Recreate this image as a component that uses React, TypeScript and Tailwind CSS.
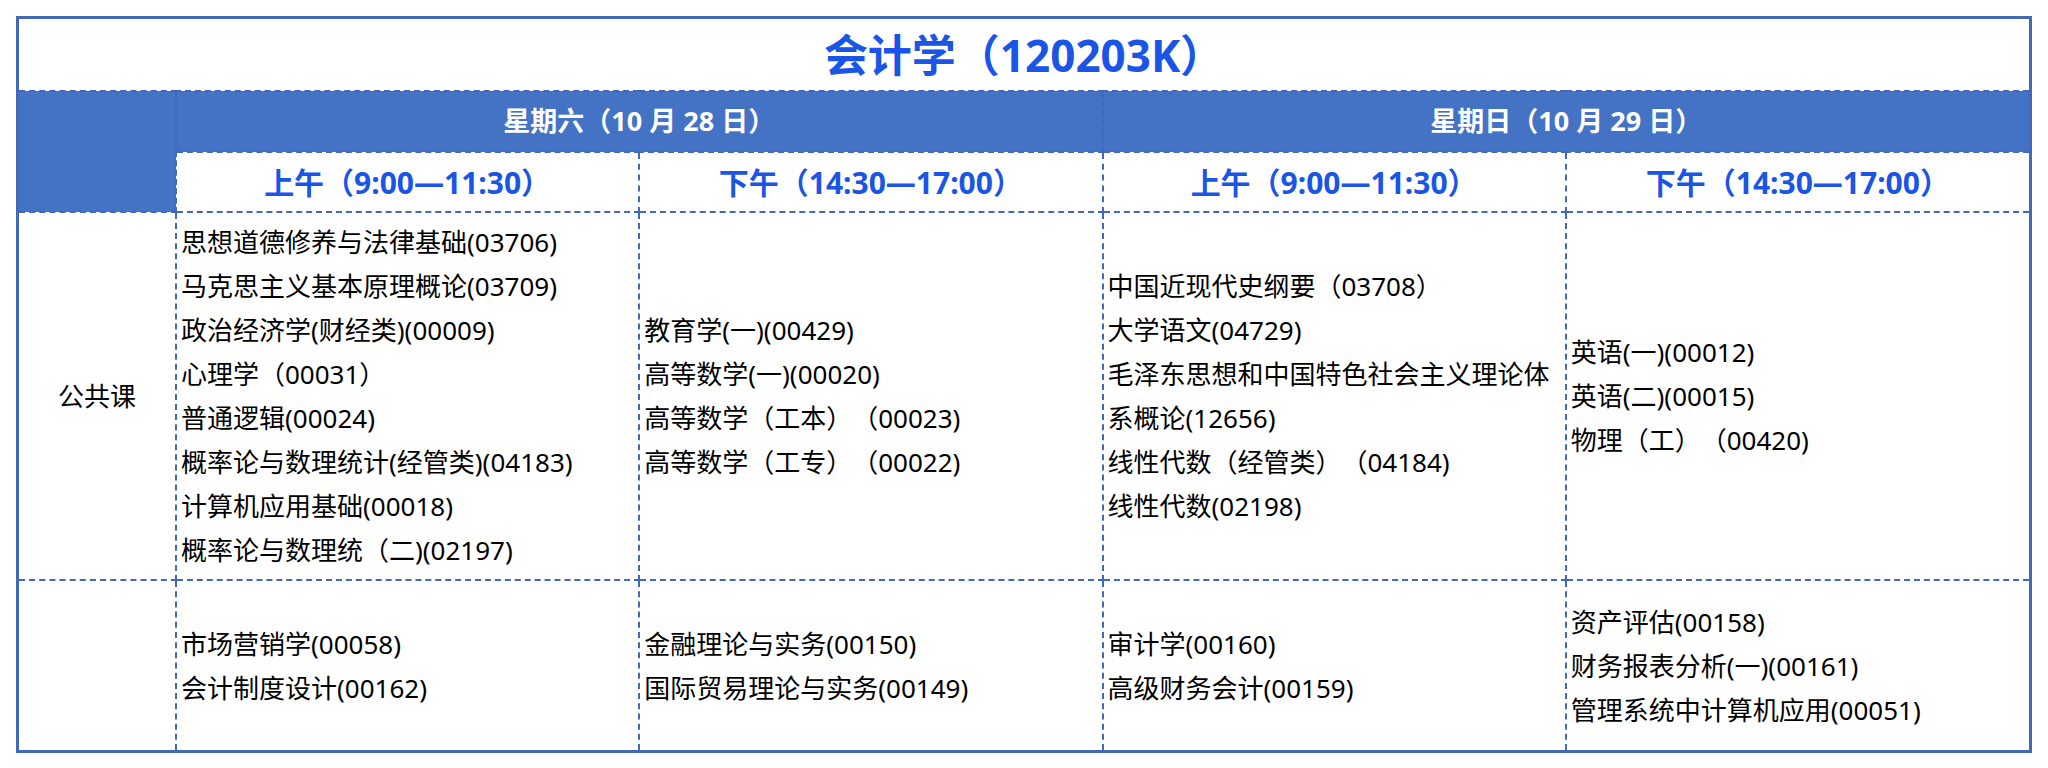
import React from "react";

type Slot = {
  label: string;
};

const days = ["星期六（10 月 28 日）", "星期日（10 月 29 日）"];

const slots: Slot[] = [
  { label: "上午（9:00—11:30）" },
  { label: "下午（14:30—17:00）" },
  { label: "上午（9:00—11:30）" },
  { label: "下午（14:30—17:00）" },
];

const publicCourses: string[][] = [
  [
    "思想道德修养与法律基础(03706)",
    "马克思主义基本原理概论(03709)",
    "政治经济学(财经类)(00009)",
    "心理学（00031）",
    "普通逻辑(00024)",
    "概率论与数理统计(经管类)(04183)",
    "计算机应用基础(00018)",
    "概率论与数理统（二)(02197)",
  ],
  [
    "教育学(一)(00429)",
    "高等数学(一)(00020)",
    "高等数学（工本）（00023)",
    "高等数学（工专）（00022)",
  ],
  [
    "中国近现代史纲要（03708）",
    "大学语文(04729)",
    "毛泽东思想和中国特色社会主义理论体系概论(12656)",
    "线性代数（经管类）（04184)",
    "线性代数(02198)",
  ],
  ["英语(一)(00012)", "英语(二)(00015)", "物理（工）（00420)"],
];

const majorCourses: string[][] = [
  ["市场营销学(00058)", "会计制度设计(00162)"],
  ["金融理论与实务(00150)", "国际贸易理论与实务(00149)"],
  ["审计学(00160)", "高级财务会计(00159)"],
  ["资产评估(00158)", "财务报表分析(一)(00161)", "管理系统中计算机应用(00051)"],
];

const cell = "border-2 border-dashed border-[#4169b8] align-middle";

function CourseCell({ items, h }: { items: string[]; h: string }) {
  return (
    <td className={`${cell} ${h} px-1 text-left`}>
      {items.map((c) => (
        <div key={c} className="leading-[44px]">
          {c}
        </div>
      ))}
    </td>
  );
}

export default function App() {
  return (
    <div className="min-h-screen bg-white pt-4 font-['Noto_Sans','Noto_Sans_CJK_SC',sans-serif] text-[26px] text-black [text-spacing-trim:space-all]">
      <div className="mx-4 border-[3px] border-[#4169b5]">
        <table className="w-full table-fixed border-collapse border-hidden">
          <colgroup>
            <col className="w-[157px]" />
            <col />
            <col />
            <col />
            <col />
          </colgroup>
          <tbody>
            {/* Title */}
            <tr>
              <td
                colSpan={5}
                className={`${cell} h-[72px] text-center text-[44px] font-bold leading-none text-[#1b55e6]`}
              >
                会计学（120203K）
              </td>
            </tr>

            {/* Days */}
            <tr>
              <td rowSpan={2} className={`${cell} bg-[#4472c4]`} />
              {days.map((d) => (
                <td
                  key={d}
                  colSpan={2}
                  className={`${cell} h-[61px] bg-[#4472c4] text-center text-[27px] font-bold text-white`}
                >
                  {d}
                </td>
              ))}
            </tr>

            {/* Time slots */}
            <tr>
              {slots.map((s, i) => (
                <td
                  key={i}
                  className={`${cell} h-[60px] text-center text-[30px] font-bold text-[#1b55e6]`}
                >
                  {s.label}
                </td>
              ))}
            </tr>

            {/* Public courses */}
            <tr>
              <td className={`${cell} h-[368px] text-center`}>公共课</td>
              {publicCourses.map((items, i) => (
                <CourseCell key={i} items={items} h="h-[368px]" />
              ))}
            </tr>

            {/* Major courses */}
            <tr>
              <td className={`${cell} h-[170px]`} />
              {majorCourses.map((items, i) => (
                <CourseCell key={i} items={items} h="h-[170px]" />
              ))}
            </tr>
          </tbody>
        </table>
      </div>
    </div>
  );
}
